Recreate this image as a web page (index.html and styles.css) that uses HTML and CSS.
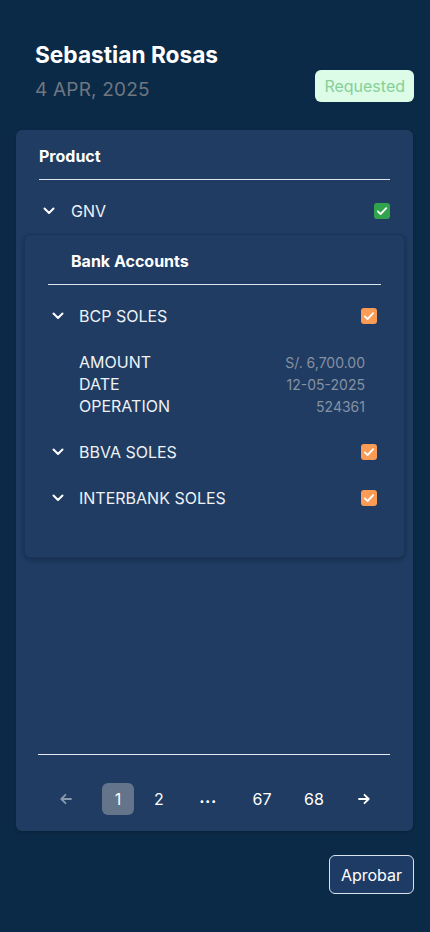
FILE: index.html
```html
<!DOCTYPE html>
<html lang="es">
<head>
<meta charset="utf-8">
<title>Sebastian Rosas</title>
<link rel="stylesheet" href="styles.css">
</head>
<body>
<div class="page">
  <header class="head">
    <div class="who">
      <h1 class="name">Sebastian Rosas</h1>
      <div class="date">4 APR, 2025</div>
    </div>
    <span class="badge">Requested</span>
  </header>

  <section class="card">
    <div class="card-title">Product</div>
    <div class="row product-row">
      <svg class="chev" width="12" height="8" viewBox="0 0 12 8"><path d="M1.5 1.5 L6 6 L10.5 1.5" fill="none" stroke="#fff" stroke-width="2" stroke-linecap="round" stroke-linejoin="round"/></svg>
      <span class="label">GNV</span>
      <span class="check green"><svg width="16" height="16" viewBox="0 0 16 16"><path d="M3.8 8.3 L6.6 11 L12.2 5.2" fill="none" stroke="#fff" stroke-width="1.8" stroke-linecap="round" stroke-linejoin="round"/></svg></span>
    </div>

    <div class="inner">
      <div class="inner-title">Bank Accounts</div>
      <div class="banks">
        <div class="row bank-row">
          <svg class="chev" width="12" height="8" viewBox="0 0 12 8"><path d="M1.5 1.5 L6 6 L10.5 1.5" fill="none" stroke="#fff" stroke-width="2" stroke-linecap="round" stroke-linejoin="round"/></svg>
          <span class="label">BCP SOLES</span>
          <span class="check orange"><svg width="16" height="16" viewBox="0 0 16 16"><path d="M3.8 8.3 L6.6 11 L12.2 5.2" fill="none" stroke="#fff" stroke-width="1.8" stroke-linecap="round" stroke-linejoin="round"/></svg></span>
        </div>
        <div class="details">
          <div class="detail"><span>AMOUNT</span><span class="val">S/. 6,700.00</span></div>
          <div class="detail"><span>DATE</span><span class="val">12-05-2025</span></div>
          <div class="detail"><span>OPERATION</span><span class="val">524361</span></div>
        </div>
        <div class="row bank-row">
          <svg class="chev" width="12" height="8" viewBox="0 0 12 8"><path d="M1.5 1.5 L6 6 L10.5 1.5" fill="none" stroke="#fff" stroke-width="2" stroke-linecap="round" stroke-linejoin="round"/></svg>
          <span class="label">BBVA SOLES</span>
          <span class="check orange"><svg width="16" height="16" viewBox="0 0 16 16"><path d="M3.8 8.3 L6.6 11 L12.2 5.2" fill="none" stroke="#fff" stroke-width="1.8" stroke-linecap="round" stroke-linejoin="round"/></svg></span>
        </div>
        <div class="row bank-row">
          <svg class="chev" width="12" height="8" viewBox="0 0 12 8"><path d="M1.5 1.5 L6 6 L10.5 1.5" fill="none" stroke="#fff" stroke-width="2" stroke-linecap="round" stroke-linejoin="round"/></svg>
          <span class="label">INTERBANK SOLES</span>
          <span class="check orange"><svg width="16" height="16" viewBox="0 0 16 16"><path d="M3.8 8.3 L6.6 11 L12.2 5.2" fill="none" stroke="#fff" stroke-width="1.8" stroke-linecap="round" stroke-linejoin="round"/></svg></span>
        </div>
      </div>
    </div>

    <nav class="pager">
      <span class="pg prev"><svg width="14" height="14" viewBox="0 0 14 14"><path d="M12 7 H2.5 M6.5 2.8 L2.3 7 L6.5 11.2" fill="none" stroke="#8a98ae" stroke-width="1.8" stroke-linecap="round" stroke-linejoin="round"/></svg></span>
      <span class="pg active">1</span>
      <span class="pg w34">2</span>
      <span class="pg dots">...</span>
      <span class="pg w44">67</span>
      <span class="pg w44">68</span>
      <span class="pg next"><svg width="14" height="14" viewBox="0 0 14 14"><path d="M2 7 H11.5 M7.5 2.8 L11.7 7 L7.5 11.2" fill="none" stroke="#fff" stroke-width="1.8" stroke-linecap="round" stroke-linejoin="round"/></svg></span>
    </nav>
  </section>

  <div class="actions">
    <button class="approve" type="button">Aprobar</button>
  </div>
</div>
</body>
</html>
```

FILE: styles.css
```css
* { box-sizing: border-box; }
html, body { margin: 0; padding: 0; }
body {
  background: #0b2a47;
  font-family: Inter, "Noto Sans", Arial, sans-serif;
  color: #eef2f7;
  height: 932px;
  overflow: hidden;
}
.page {
  padding: 0 17px 0 16px;
}
.head {
  display: flex;
  justify-content: space-between;
  align-items: flex-end;
  padding: 41px 0 0 19px;
}
.name {
  margin: 0;
  font-size: 22.7px;
  line-height: 28px;
  font-weight: 700;
  color: #ffffff;
}
.date {
  margin-top: 7px;
  font-size: 19px;
  line-height: 28px;
  color: #6f7780;
  letter-spacing: 0.2px;
}
.badge {
  display: inline-flex;
  align-items: center;
  height: 32px;
  padding: 0 9px;
  margin: 0 -1px 2px 0;
  background: #dcfce7;
  color: #86cf98;
  border-radius: 6px;
  font-size: 16px;
}
.card {
  margin-top: 26px;
  height: 701px;
  background: #203c62;
  border-radius: 6px;
  padding: 16px 23px 16px 23px;
  display: flex;
  flex-direction: column;
  box-shadow: 0 1px 3px rgba(0,0,0,0.25);
}
.card-title {
  font-size: 16px;
  line-height: 20px;
  font-weight: 700;
  color: #ffffff;
  padding-bottom: 13px;
  border-bottom: 1px solid #dfe5ee;
}
.row {
  display: flex;
  align-items: center;
  height: 24px;
}
.chev { flex: none; }
.label {
  flex: 1;
  font-size: 16px;
  color: #eef2f7;
}
.product-row {
  margin-top: 19px;
  padding-left: 4px;
}
.product-row .label { margin-left: 16px; }
.check {
  flex: none;
  width: 16px;
  height: 16px;
  border-radius: 3px;
  display: block;
}
.check svg { display: block; }
.green { background: #31a34c; }
.orange { background: #fb9b55; }

.inner {
  margin: 11px -15px 0 -15px;
  border: 1px solid #19335a;
  border-radius: 6px;
  background: #203c62;
  box-shadow: 0 2px 4px rgba(5,20,40,0.35);
  padding: 16px 23px 47px 23px;
}
.inner-title {
  font-size: 16px;
  line-height: 20px;
  font-weight: 700;
  color: #ffffff;
  padding: 0 0 13px 23px;
  border-bottom: 1px solid #dfe5ee;
}
.banks {
  display: flex;
  flex-direction: column;
  gap: 22px;
  padding-top: 19px;
}
.bank-row { padding: 0 4px; }
.bank-row .label { margin-left: 15px; }
.details {
  padding: 1px 16px 1px 31px;
}
.detail {
  display: flex;
  justify-content: space-between;
  align-items: center;
  height: 22px;
  font-size: 16px;
  color: #eef2f7;
}
.val {
  font-size: 14px;
  color: #8691a3;
}

.pager {
  margin-top: auto;
  border-top: 1px solid #e6ebf2;
  padding-top: 28px;
  display: flex;
  align-items: center;
  gap: 8px;
  margin-left: -1px;
}
.pg {
  height: 32px;
  display: flex;
  align-items: center;
  justify-content: center;
  font-size: 16px;
  color: #ffffff;
  border-radius: 6px;
}
.prev { width: 56px; }
.next { width: 40px; }
.active { width: 32px; background: #64748b; }
.w34 { width: 34px; }
.w44 { width: 44px; }
.dots { width: 48px; font-weight: 700; letter-spacing: 0.5px; padding-bottom: 4px; }

.actions {
  display: flex;
  justify-content: flex-end;
  margin-top: 24px;
  margin-right: -1px;
}
.approve {
  height: 39px;
  width: 85px;
  background: #1e3b65;
  border: 1px solid #dde3ec;
  border-radius: 6px;
  color: #ffffff;
  font-family: Inter, "Noto Sans", Arial, sans-serif;
  font-size: 16px;
  padding: 0;
}
```
